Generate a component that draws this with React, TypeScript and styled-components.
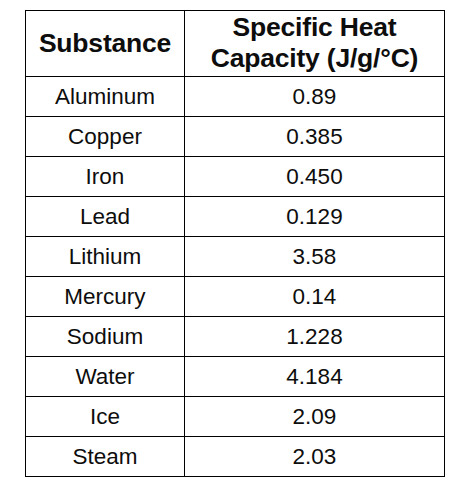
import styled, { createGlobalStyle } from "styled-components";

const Global = createGlobalStyle`
  body {
    margin: 0;
    background: #ffffff;
    font-family: "Liberation Sans", Arial, sans-serif;
    color: #0d0d0d;
  }
`;

const Page = styled.div`
  padding: 10px 0 0 25px;
`;

const Table = styled.table`
  border-collapse: collapse;
  width: 417px;
  table-layout: fixed;
`;

const HeadRow = styled.tr`
  height: 66px;
`;

const Row = styled.tr`
  height: 40px;
`;

const Th = styled.th<{ $w: number }>`
  width: ${(p) => p.$w}px;
  border: 1.5px solid #000;
  font-size: 26.5px;
  font-weight: 700;
  line-height: 31px;
  letter-spacing: -0.2px;
  text-align: center;
  vertical-align: middle;
  padding: 0 0 1px;
`;

const Td = styled.td`
  border: 1.5px solid #000;
  font-size: 22.5px;
  line-height: 26px;
  text-align: center;
  vertical-align: middle;
  padding: 1px 0 0;
`;

const data: [string, string][] = [
  ["Aluminum", "0.89"],
  ["Copper", "0.385"],
  ["Iron", "0.450"],
  ["Lead", "0.129"],
  ["Lithium", "3.58"],
  ["Mercury", "0.14"],
  ["Sodium", "1.228"],
  ["Water", "4.184"],
  ["Ice", "2.09"],
  ["Steam", "2.03"],
];

export default function App() {
  return (
    <Page>
      <Global />
      <Table>
        <thead>
          <HeadRow>
            <Th $w={158}>Substance</Th>
            <Th $w={259}>
              Specific Heat
              <br />
              Capacity (J/g/°C)
            </Th>
          </HeadRow>
        </thead>
        <tbody>
          {data.map(([name, value]) => (
            <Row key={name}>
              <Td>{name}</Td>
              <Td>{value}</Td>
            </Row>
          ))}
        </tbody>
      </Table>
    </Page>
  );
}
